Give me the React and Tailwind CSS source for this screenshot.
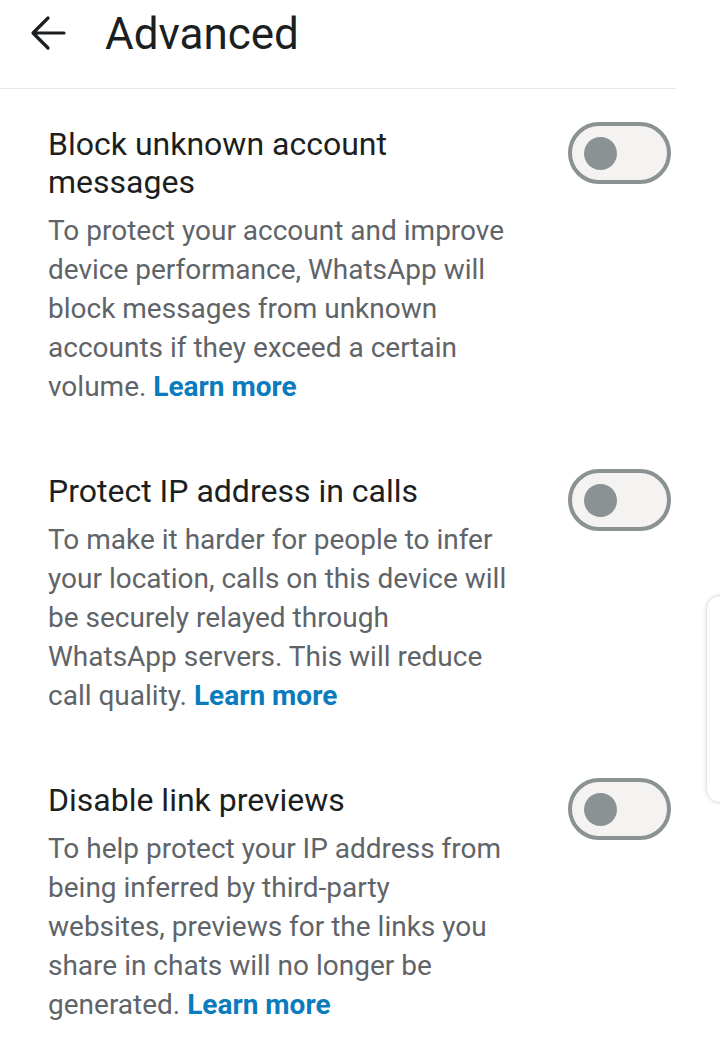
const sections = [
    {
        title: ["Block unknown account", "messages"],
        lines: [
            "To protect your account and improve",
            "device performance, WhatsApp will",
            "block messages from unknown",
            "accounts if they exceed a certain",
            "volume.",
        ],
    },
    {
        title: ["Protect IP address in calls"],
        lines: [
            "To make it harder for people to infer",
            "your location, calls on this device will",
            "be securely relayed through",
            "WhatsApp servers. This will reduce",
            "call quality.",
        ],
    },
    {
        title: ["Disable link previews"],
        lines: [
            "To help protect your IP address from",
            "being inferred by third-party",
            "websites, previews for the links you",
            "share in chats will no longer be",
            "generated.",
        ],
    },
];

function BackArrow() {
    return (
        <svg width="36" height="36" viewBox="0 0 36 36" fill="none" stroke="#1c1f21" strokeWidth="3.2"
             strokeLinecap="round" strokeLinejoin="round">
            <path d="M34 18H4M18 3L3 18l15 15"/>
        </svg>
    );
}

function Toggle() {
    return (
        <div className="w-[103px] h-[62px] shrink-0 rounded-full border-4 border-[#8a9293] bg-[#f5f3f1] flex items-center pl-[12px]">
            <div className="w-[33px] h-[33px] rounded-full bg-[#8a9293]"/>
        </div>
    );
}

function Setting({title, lines}) {
    return (
        <div className="flex justify-between pl-[48px] pr-[49px]">
            <div className="flex flex-col">
                <h2 className="text-[32px] leading-[38px] text-[#1c1f21]">
                    {title.map((t, i) => <span key={i} className="block whitespace-nowrap">{t}</span>)}
                </h2>
                <p className="text-[28px] leading-[39px] text-[#5f6469] mt-[10px]">
                    {lines.map((l, i) => (
                        <span key={i} className="block whitespace-nowrap">
                            {l}
                            {i === lines.length - 1 &&
                                <span className="font-bold text-[#0a7cbd]"> Learn more</span>}
                        </span>
                    ))}
                </p>
            </div>
            <div className="-mt-[3px]">
                <Toggle/>
            </div>
        </div>
    );
}

export default function App() {
    return (
        <div className="relative w-[720px] h-[1040px] bg-white overflow-hidden" style={{fontFamily: "Roboto, 'Noto Sans', sans-serif"}}>
            <div className="w-[676px] h-[89px] border-b border-[#e6e6e6] flex items-start">
                <div className="ml-[30px] mt-[15px]">
                    <BackArrow/>
                </div>
                <h1 className="ml-[39px] mt-[8px] text-[44px] leading-[52px] text-[#1c1f21]">Advanced</h1>
            </div>
            <div className="flex flex-col gap-[66px] pt-[36px]">
                {sections.map((s, i) => <Setting key={i} {...s}/>)}
            </div>
            <div className="absolute left-[706px] top-[595px] w-[40px] h-[208px] rounded-[14px] border border-[#e3e3e3] bg-white shadow-[0_0_4px_rgba(0,0,0,0.12)]"/>
        </div>
    );
}
